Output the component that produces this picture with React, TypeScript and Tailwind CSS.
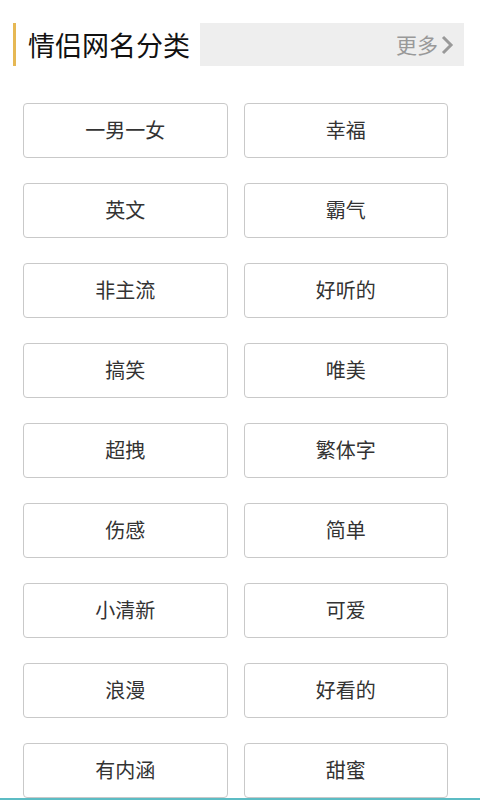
import { ReactNode } from "react";

const categories = [
	"一男一女",
	"幸福",
	"英文",
	"霸气",
	"非主流",
	"好听的",
	"搞笑",
	"唯美",
	"超拽",
	"繁体字",
	"伤感",
	"简单",
	"小清新",
	"可爱",
	"浪漫",
	"好看的",
	"有内涵",
	"甜蜜",
];

function CategoryButton({ children }: { children: ReactNode }) {
	return (
		<button className="h-[55px] w-full rounded-[4px] border border-[#c9c9c9] bg-white text-[20px] leading-none pb-[2px] text-[#333] flex items-center justify-center">
			{children}
		</button>
	);
}

export default function App() {
	return (
		<div
			className="h-[800px] w-[480px] overflow-hidden bg-white"
			style={{ fontFamily: '"Noto Sans CJK SC", "Noto Sans", sans-serif' }}
		>
			{/* header */}
			<div className="pt-[23px] pl-[13px] pr-[16px] flex items-stretch h-[66px]">
				<div className="w-[3px] bg-[#e6b854]" />
				<div className="pl-[12px] flex items-center text-[27px] text-[#111] leading-none w-[184px]">
					情侣网名分类
				</div>
				<div className="flex-1 bg-[#eeeeee] flex items-center justify-end pr-[10px] text-[21px] text-[#999]">
					更多
					<svg width="14" height="22" viewBox="0 0 14 22" className="ml-[2px]">
						<path d="M3 3 L11 11 L3 19" fill="none" stroke="#999" strokeWidth="3" />
					</svg>
				</div>
			</div>

			{/* grid */}
			<div className="mt-[37px] ml-[23px] w-[425px] grid grid-cols-2 gap-x-[16px] gap-y-[25px]">
				{categories.map((c) => (
					<CategoryButton key={c}>{c}</CategoryButton>
				))}
			</div>

			<div className="border-t-2 border-[#5cbcc4]" />
		</div>
	);
}
